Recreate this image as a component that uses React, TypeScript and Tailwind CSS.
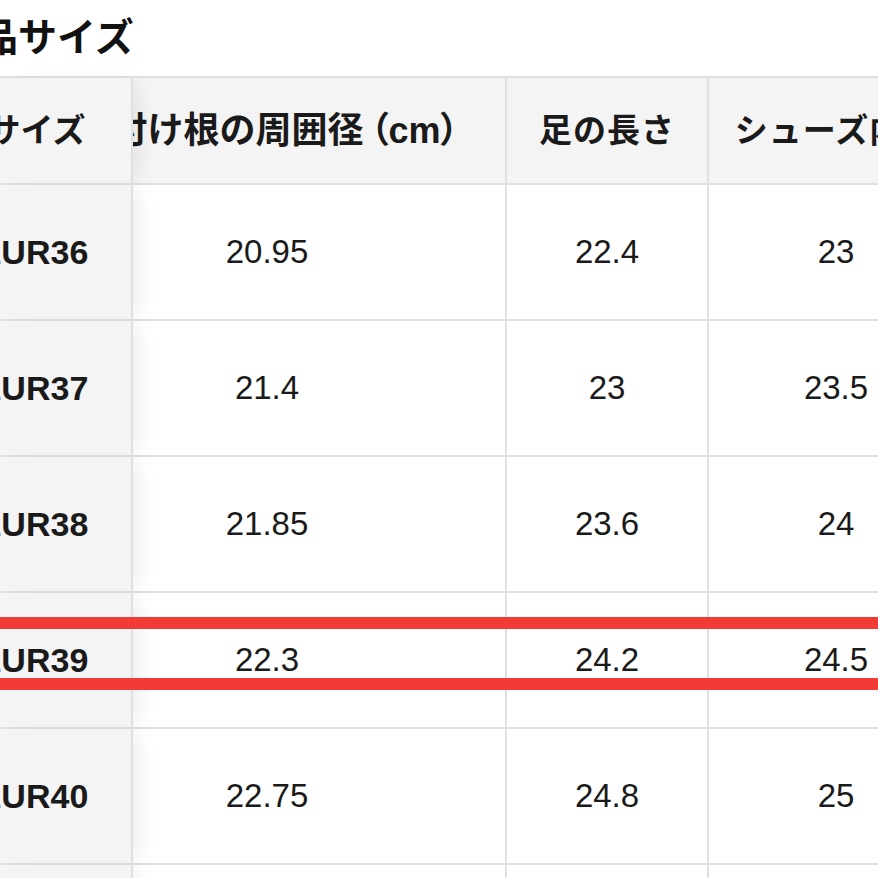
import React from 'react';

interface SizeRow {
  eu: string;
  girth: string;
  foot: string;
  shoe: string;
}

const rows: SizeRow[] = [
  { eu: 'EUR36', girth: '20.95', foot: '22.4', shoe: '23' },
  { eu: 'EUR37', girth: '21.4', foot: '23', shoe: '23.5' },
  { eu: 'EUR38', girth: '21.85', foot: '23.6', shoe: '24' },
  { eu: 'EUR39', girth: '22.3', foot: '24.2', shoe: '24.5' },
  { eu: 'EUR40', girth: '22.75', foot: '24.8', shoe: '25' },
  { eu: 'EUR41', girth: '23.2', foot: '25.4', shoe: '25.5' },
];

const font = "font-['Liberation_Sans','Noto_Sans_CJK_JP',sans-serif]";

// sticky first column sits over the scrolled table
const stickyCell =
  'relative z-10 bg-[#f4f4f4] border-r-2 border-b-2 border-[#e0e0e0] shadow-[12px_0_18px_-6px_rgba(0,0,0,0.07)] flex items-center justify-end overflow-hidden';

const App: React.FC = () => {
  return (
    <div className={`relative w-[878px] h-[878px] overflow-hidden bg-white text-[#1a1a1a] ${font}`}>
      <div className="h-[76px] flex items-center">
        <h2 className="ml-[-60px] text-[39px] font-bold whitespace-nowrap text-[#111]">商品サイズ</h2>
      </div>

      <div className="w-[963px] border-t-2 border-[#e0e0e0]">
        {/* header */}
        <div className="grid grid-cols-[133px_374px_202px_254px] h-[107px] bg-[#f4f4f4] font-bold text-[33px]">
          <div className={stickyCell}>
            <span className="w-[197px] shrink-0 mr-[-4px] text-center whitespace-nowrap">サイズ</span>
          </div>
          <div className="flex items-center justify-center pr-[104px] border-r-2 border-b-2 border-[#e0e0e0] whitespace-nowrap text-[36px]">
            指付け根の周囲径<span className="ml-[7px] [font-feature-settings:'palt']">（cm）</span>
          </div>
          <div className="flex items-center justify-center border-r-2 border-b-2 border-[#e0e0e0] whitespace-nowrap tracking-[1px]">
            足の長さ
          </div>
          <div className="flex items-center justify-center border-b-2 border-[#e0e0e0] whitespace-nowrap tracking-[1px]">
            シューズ内寸
          </div>
        </div>

        {rows.map((row) => (
          <div key={row.eu} className="grid grid-cols-[133px_374px_202px_254px] h-[136px] text-[33px]">
            <div className={stickyCell}>
              <span className="w-[197px] shrink-0 mr-[-1px] text-center text-[34px] font-bold whitespace-nowrap">{row.eu}</span>
            </div>
            <div className="flex items-center justify-center pr-[104px] border-r-2 border-b-2 border-[#e0e0e0]">
              {row.girth}
            </div>
            <div className="flex items-center justify-center border-r-2 border-b-2 border-[#e0e0e0]">
              {row.foot}
            </div>
            <div className="flex items-center justify-center border-b-2 border-[#e0e0e0]">
              {row.shoe}
            </div>
          </div>
        ))}
      </div>

      {/* markup highlight around EUR39 */}
      <div className="absolute z-20 left-[-20px] right-[-20px] top-[617px] h-[73px] border-y-[12px] border-[#f33b35]" />
    </div>
  );
};

export default App;
